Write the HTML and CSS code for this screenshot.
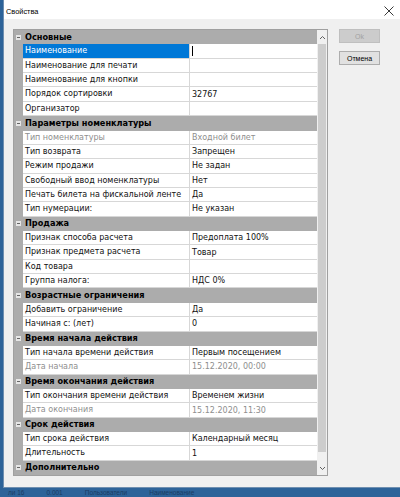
FILE: index.html
```html
<!DOCTYPE html>
<html>
<head>
<meta charset="utf-8">
<link rel="stylesheet" href="styles.css">
</head>
<body>
<div class="window">
  <div class="titlebar">
    <span class="title">Свойства</span>
    <svg class="close" width="10" height="10" viewBox="0 0 10 10"><path d="M0.5 0.5L9.5 9.5M9.5 0.5L0.5 9.5" stroke="#222" stroke-width="0.9" fill="none"/></svg>
  </div>
  <div class="content">
    <div class="grid">
      <div class="rows">
        <div class="cat"><span class="minus"></span><span>Основные</span></div>
        <div class="row"><span class="gutter"></span><span class="name selected">Наименование</span><span class="value"><span class="caret"></span></span></div>
        <div class="row"><span class="gutter"></span><span class="name">Наименование для печати</span><span class="value"></span></div>
        <div class="row"><span class="gutter"></span><span class="name">Наименование для кнопки</span><span class="value"></span></div>
        <div class="row"><span class="gutter"></span><span class="name">Порядок сортировки</span><span class="value">32767</span></div>
        <div class="row"><span class="gutter"></span><span class="name">Организатор</span><span class="value"></span></div>
        <div class="cat"><span class="minus"></span><span>Параметры номенклатуры</span></div>
        <div class="row disabled"><span class="gutter"></span><span class="name">Тип номенклатуры</span><span class="value">Входной билет</span></div>
        <div class="row"><span class="gutter"></span><span class="name">Тип возврата</span><span class="value">Запрещен</span></div>
        <div class="row"><span class="gutter"></span><span class="name">Режим продажи</span><span class="value">Не задан</span></div>
        <div class="row"><span class="gutter"></span><span class="name">Свободный ввод номенклатуры</span><span class="value">Нет</span></div>
        <div class="row"><span class="gutter"></span><span class="name">Печать билета на фискальной ленте</span><span class="value">Да</span></div>
        <div class="row"><span class="gutter"></span><span class="name">Тип нумерации:</span><span class="value">Не указан</span></div>
        <div class="cat"><span class="minus"></span><span>Продажа</span></div>
        <div class="row"><span class="gutter"></span><span class="name">Признак способа расчета</span><span class="value">Предоплата 100%</span></div>
        <div class="row"><span class="gutter"></span><span class="name">Признак предмета расчета</span><span class="value">Товар</span></div>
        <div class="row"><span class="gutter"></span><span class="name">Код товара</span><span class="value"></span></div>
        <div class="row"><span class="gutter"></span><span class="name">Группа налога:</span><span class="value">НДС 0%</span></div>
        <div class="cat"><span class="minus"></span><span>Возрастные ограничения</span></div>
        <div class="row"><span class="gutter"></span><span class="name">Добавить ограничение</span><span class="value">Да</span></div>
        <div class="row"><span class="gutter"></span><span class="name">Начиная с: (лет)</span><span class="value">0</span></div>
        <div class="cat"><span class="minus"></span><span>Время начала действия</span></div>
        <div class="row"><span class="gutter"></span><span class="name">Тип начала времени действия</span><span class="value">Первым посещением</span></div>
        <div class="row disabled"><span class="gutter"></span><span class="name">Дата начала</span><span class="value">15.12.2020, 00:00</span></div>
        <div class="cat"><span class="minus"></span><span>Время окончания действия</span></div>
        <div class="row"><span class="gutter"></span><span class="name">Тип окончания времени действия</span><span class="value">Временем жизни</span></div>
        <div class="row disabled"><span class="gutter"></span><span class="name">Дата окончания</span><span class="value">15.12.2020, 11:30</span></div>
        <div class="cat"><span class="minus"></span><span>Срок действия</span></div>
        <div class="row"><span class="gutter"></span><span class="name">Тип срока действия</span><span class="value">Календарный месяц</span></div>
        <div class="row"><span class="gutter"></span><span class="name">Длительность</span><span class="value">1</span></div>
        <div class="cat"><span class="minus"></span><span>Дополнительно</span></div>
      </div>
      <div class="scrollbar">
        <div class="arrow"><svg width="7" height="5" viewBox="0 0 7 5"><path d="M1 4L3.5 1.5L6 4" stroke="#606060" stroke-width="1" fill="none"/></svg></div>
        <div class="thumb"></div>
        <div class="track"></div>
        <div class="arrow"><svg width="7" height="5" viewBox="0 0 7 5"><path d="M1 1L3.5 3.5L6 1" stroke="#606060" stroke-width="1" fill="none"/></svg></div>
      </div>
    </div>
    <div class="buttons">
      <div class="btn btn-disabled">Ok</div>
      <div class="btn">Отмена</div>
    </div>
  </div>
</div>
<div class="desktop-text"><span>ли 16</span><span>0.001</span><span>Пользователи</span><span>Наименование</span></div>
</body>
</html>
```
FILE: styles.css
```css
html, body {
  margin: 0;
  padding: 0;
}
body {
  width: 400px;
  height: 497px;
  overflow: hidden;
  background: #2d6399;
  font-family: "DejaVu Sans", sans-serif;
}
.window {
  margin-left: 3px;
  width: 397px;
  height: 488px;
  background: #f0f0f0;
  box-sizing: border-box;
  border-left: 1px solid #6f8fb0;
  border-bottom: 1px solid #6f8fb0;
}
.titlebar {
  height: 19px;
  box-sizing: border-box;
  padding: 3px 6px 0 2px;
  background: #ffffff;
  display: flex;
  align-items: center;
  justify-content: space-between;
}
.title {
  font-family: "Liberation Sans", sans-serif;
  font-size: 7.4px;
  color: #000;
}
.close {
  display: block;
}
.content {
  display: flex;
  padding: 10px 0 0 9px;
}
.grid {
  width: 315px;
  height: 447px;
  box-sizing: border-box;
  border: 1px solid #a0a0a0;
  background: #fff;
  display: flex;
  overflow: hidden;
}
.rows {
  width: 303px;
  display: flex;
  flex-direction: column;
}
.cat, .row {
  height: 14.37px;
  flex: none;
  box-sizing: border-box;
  font-size: 8px;
  line-height: 13px;
  white-space: nowrap;
}
.cat {
  display: flex;
  align-items: center;
  background: #acacac;
  font-weight: bold;
  font-size: 8.2px;
  color: #000;
  padding-left: 2px;
}
.minus {
  width: 5px;
  height: 5px;
  background: #e6e6e6;
  margin-right: 4px;
  position: relative;
  flex: none;
}
.minus::after {
  content: "";
  position: absolute;
  left: 1px;
  top: 2px;
  width: 3px;
  height: 1px;
  background: #666;
}
.row {
  display: flex;
  color: #111;
}
.gutter {
  width: 9px;
  flex: none;
  background: #acacac;
}
.name {
  width: 167px;
  flex: none;
  box-sizing: border-box;
  border-right: 1px solid #d7d7d7;
  border-bottom: 1px solid #d7d7d7;
  padding-left: 2px;
  overflow: hidden;
}
.value {
  flex: 1;
  box-sizing: border-box;
  border-bottom: 1px solid #d7d7d7;
  padding-left: 2px;
  overflow: hidden;
  display: flex;
  align-items: center;
}
.selected {
  background: #0078d7;
  color: #fff;
}
.caret {
  width: 1px;
  height: 10px;
  background: #000;
}
.disabled {
  color: #8e8e8e;
}
.scrollbar {
  width: 10px;
  display: flex;
  flex-direction: column;
  background: #f0f0f0;
}
.arrow {
  height: 14px;
  flex: none;
  display: flex;
  align-items: center;
  justify-content: center;
}
.thumb {
  height: 408px;
  flex: none;
  background: #cdcdcd;
  margin: 0 1px;
}
.track {
  flex: 1;
}
.buttons {
  margin-left: 11px;
  display: flex;
  flex-direction: column;
  gap: 8px;
}
.btn {
  width: 41px;
  height: 14px;
  box-sizing: border-box;
  border: 1px solid #adadad;
  background: #e1e1e1;
  font-family: "Liberation Sans", sans-serif;
  font-size: 7px;
  color: #000;
  display: flex;
  align-items: center;
  justify-content: center;
}
.btn-disabled {
  background: #cccccc;
  border-color: #bfbfbf;
  color: #a2a2a2;
}
.desktop-text {
  display: flex;
  gap: 22px;
  padding: 0 0 0 8px;
  font-family: "Liberation Sans", sans-serif;
  font-size: 6.5px;
  line-height: 9px;
  color: #1b3c63;
  white-space: nowrap;
}
```
